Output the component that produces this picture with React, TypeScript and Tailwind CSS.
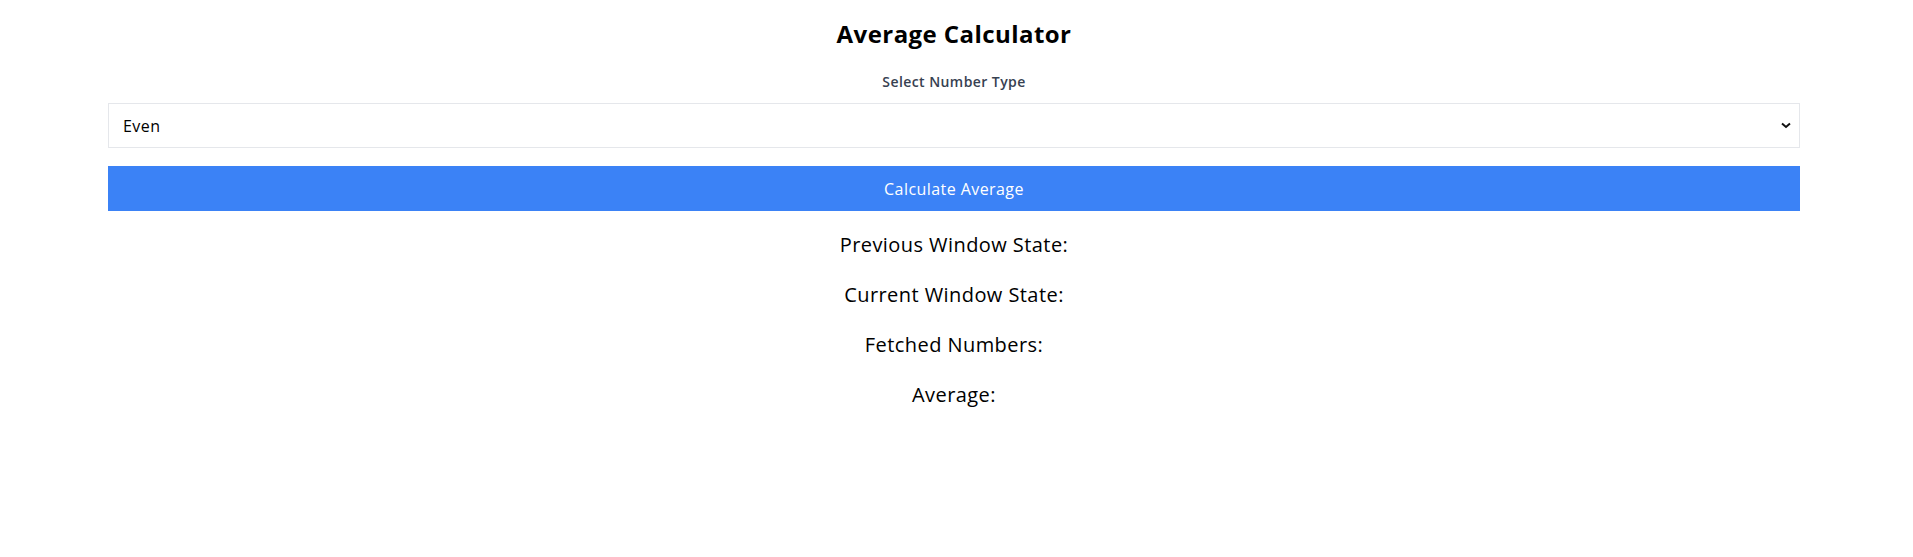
import React from "react";

export default function App() {
  return (
    <div
      className="min-h-screen bg-white pt-[18px] pl-[108px] pr-[113px] tracking-[0.027em]"
      style={{ fontFamily: '"Open Sans", "Noto Sans", sans-serif' }}
    >
      <h1 className="text-center text-2xl font-bold leading-8 text-black">Average Calculator</h1>
      <label className="mt-[22px] block text-center text-sm font-semibold leading-5 text-[#374151]">
        Select Number Type
      </label>
      <div className="relative mt-[11px]">
        <select
          className="h-[45px] w-full appearance-none border border-[#e5e7eb] bg-white pl-[14px] text-base tracking-[0.027em] text-black outline-none"
          defaultValue="even"
        >
          <option value="prime">Prime</option>
          <option value="fibonacci">Fibonacci</option>
          <option value="even">Even</option>
          <option value="random">Random</option>
        </select>
        <svg
          className="pointer-events-none absolute right-[9px] top-[19px]"
          width="10"
          height="7"
          viewBox="0 0 10 7"
          fill="none"
        >
          <polyline points="1,1.5 5,5 9,1.5" stroke="#111" strokeWidth="2" />
        </svg>
      </div>
      <button className="mt-[18px] block h-[45px] w-full bg-[#3b82f6] text-base tracking-[0.027em] text-white">
        Calculate Average
      </button>
      <div className="mt-[20px] text-center text-xl leading-7 text-black">
        <p>Previous Window State:</p>
        <p className="mt-[22px]">Current Window State:</p>
        <p className="mt-[22px]">Fetched Numbers:</p>
        <p className="mt-[22px]">Average:</p>
      </div>
    </div>
  );
}
